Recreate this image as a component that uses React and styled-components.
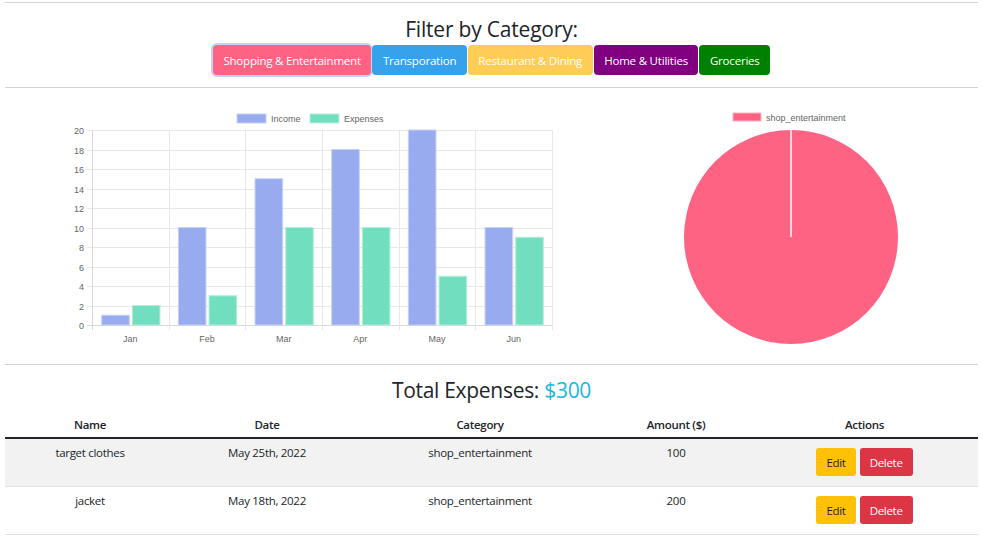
import React from 'react'
import styled, { createGlobalStyle } from 'styled-components'

const GlobalStyle = createGlobalStyle`
    body {
        margin: 0;
        font-family: "Open Sans", "Noto Sans", sans-serif;
        color: #212529;
        background: #fff;
    }
`

const Page = styled.div`
    width: 983px;
    padding-top: 2px;
`

const Divider = styled.hr`
    margin: 0 5px;
    border: 0;
    border-top: 1px solid #d3d3d3;
`

const Header = styled.div`
    height: 84px;
    display: flex;
    flex-direction: column;
    align-items: center;
`

const Title = styled.h2`
    margin: 13px 0 3px;
    font-size: 21px;
    font-weight: 400;
    line-height: 26px;
    letter-spacing: -0.2px;
`

const Buttons = styled.div`
    display: flex;
    gap: 1px;
`

const CatButton = styled.button`
    height: 30px;
    padding: 0 10.5px;
    border: 0;
    border-radius: 4px;
    font-family: inherit;
    font-size: 11.5px;
    letter-spacing: -0.2px;
    color: #fff;
    background: ${p => p.color};
    box-shadow: ${p => p.active ? '0 0 0 2px #c3d4f4' : 'none'};
    cursor: pointer;
`

const Charts = styled.div`
    height: 276px;
    display: flex;
    align-items: flex-start;
    padding-left: 60px;
`

const BarBox = styled.div`
    width: 500px;
    margin-top: 18px;
`

const PieBox = styled.div`
    width: 240px;
    margin-left: 111px;
    margin-top: 18px;
`

const Total = styled.h3`
    margin: 12px 0 8px;
    text-align: center;
    font-size: 21px;
    font-weight: 400;
    line-height: 26px;
    letter-spacing: -0.3px;
`

const Money = styled.span`
    color: #1ab8dc;
`

const Table = styled.table`
    width: 973px;
    margin: 0 5px;
    border-collapse: collapse;
    table-layout: fixed;
    font-size: 11.5px;
    letter-spacing: -0.3px;
`

const Th = styled.th`
    height: 26px;
    padding: 0;
    font-weight: 600;
    text-align: center;
    vertical-align: middle;
    border-bottom: 2px solid #212529;
`

const Row = styled.tr`
    background: ${p => p.striped ? '#f2f2f2' : '#fff'};
    border-bottom: 1px solid #dee2e6;
`

const Td = styled.td`
    height: 41px;
    padding: 6px 0 0;
    text-align: center;
    vertical-align: top;
`

const ActionCell = styled.td`
    padding: 9px 0 0;
    vertical-align: top;
    text-align: center;
`

const SmallButton = styled.button`
    height: 28px;
    padding: 0 10px;
    margin: 0 2px;
    border: 0;
    border-radius: 3px;
    font-family: inherit;
    font-size: 11.5px;
    letter-spacing: -0.3px;
    color: ${p => p.dark ? '#212529' : '#fff'};
    background: ${p => p.bg};
`

const categories = [
    { label: 'Shopping & Entertainment', color: '#ff6384', active: true },
    { label: 'Transporation', color: '#36a2eb' },
    { label: 'Restaurant & Dining', color: '#ffcd56' },
    { label: 'Home & Utilities', color: '#800080' },
    { label: 'Groceries', color: '#008000' },
]

const months = [
    { m: 'Jan', income: 1, expense: 2 },
    { m: 'Feb', income: 10, expense: 3 },
    { m: 'Mar', income: 15, expense: 10 },
    { m: 'Apr', income: 18, expense: 10 },
    { m: 'May', income: 20, expense: 5 },
    { m: 'Jun', income: 10, expense: 9 },
]

const expenses = [
    { name: 'target clothes', date: 'May 25th, 2022', category: 'shop_entertainment', amount: 100 },
    { name: 'jacket', date: 'May 18th, 2022', category: 'shop_entertainment', amount: 200 },
]

const chartFont = '"Liberation Sans", Arial, sans-serif'

const BarChart = () => {
    const left = 32
    const right = 492
    const top = 24
    const zero = 219
    const step = (zero - top) / 20
    const cat = (right - left) / 6
    const slot = cat * 0.8 / 2
    const barW = slot * 0.9

    return (
        <svg width="500" height="240" fontFamily={chartFont} fontSize="9" fill="#666">
            <rect x="177" y="8" width="29" height="9" fill="#97abee" stroke="#c6d1f6" />
            <text x="211" y="15.5">Income</text>
            <rect x="250" y="8" width="29" height="9" fill="#71dfbf" stroke="#b5eedd" />
            <text x="284" y="15.5">Expenses</text>

            {Array.from({ length: 11 }).map((_, i) => {
                const y = Math.round(zero - i * 2 * step)
                return (
                    <g key={i}>
                        <line x1={left - 5} x2={right} y1={y + 0.5} y2={y + 0.5} stroke={i === 0 ? '#d9d9d9' : '#e8e8e8'} />
                        <text x={left - 8} y={y + 3.5} textAnchor="end">{i * 2}</text>
                    </g>
                )
            })}
            {Array.from({ length: 7 }).map((_, i) => {
                const x = Math.round(left + i * cat) + 0.5
                return <line key={i} x1={x} x2={x} y1={top} y2={zero + 5} stroke={i === 0 ? '#d9d9d9' : '#e8e8e8'} />
            })}

            {months.map((d, i) => {
                const x0 = left + i * cat + cat * 0.1
                return (
                    <g key={d.m}>
                        <rect x={x0 + (slot - barW) / 2 + 0.5} y={zero - d.income * step} width={barW} height={d.income * step} fill="#97abee" stroke="#c6d1f6" strokeWidth="1" />
                        <rect x={x0 + slot + (slot - barW) / 2 + 0.5} y={zero - d.expense * step} width={barW} height={d.expense * step} fill="#71dfbf" stroke="#b5eedd" strokeWidth="1" />
                        <text x={left + i * cat + cat / 2} y={zero + 17} textAnchor="middle">{d.m}</text>
                    </g>
                )
            })}
        </svg>
    )
}

const PieChart = () => (
    <svg width="240" height="245" fontFamily={chartFont} fontSize="9" fill="#666">
        <rect x="62" y="7" width="28" height="8" fill="#ff6384" stroke="#ffb1c1" />
        <text x="95" y="14.5">shop_entertainment</text>
        <circle cx="120" cy="131" r="107" fill="#ff6384" />
        <line x1="120" x2="120" y1="24" y2="131" stroke="#fff" strokeWidth="1.5" />
    </svg>
)

const App = () => {
    return (
        <Page>
            <GlobalStyle />
            <Divider />
            <Header>
                <Title>Filter by Category:</Title>
                <Buttons>
                    {categories.map(c => (
                        <CatButton key={c.label} color={c.color} active={c.active}>{c.label}</CatButton>
                    ))}
                </Buttons>
            </Header>
            <Divider />
            <Charts>
                <BarBox><BarChart /></BarBox>
                <PieBox><PieChart /></PieBox>
            </Charts>
            <Divider />
            <Total>Total Expenses: <Money>$300</Money></Total>
            <Table>
                <colgroup>
                    <col style={{ width: 170 }} />
                    <col style={{ width: 184 }} />
                    <col style={{ width: 242 }} />
                    <col style={{ width: 150 }} />
                    <col style={{ width: 227 }} />
                </colgroup>
                <thead>
                    <tr>
                        <Th>Name</Th>
                        <Th>Date</Th>
                        <Th>Category</Th>
                        <Th>Amount ($)</Th>
                        <Th>Actions</Th>
                    </tr>
                </thead>
                <tbody>
                    {expenses.map((e, i) => (
                        <Row key={e.name} striped={i % 2 === 0}>
                            <Td>{e.name}</Td>
                            <Td>{e.date}</Td>
                            <Td>{e.category}</Td>
                            <Td>{e.amount}</Td>
                            <ActionCell>
                                <SmallButton bg="#ffc107" dark>Edit</SmallButton>
                                <SmallButton bg="#dc3545">Delete</SmallButton>
                            </ActionCell>
                        </Row>
                    ))}
                </tbody>
            </Table>
        </Page>
    )
}

export default App
